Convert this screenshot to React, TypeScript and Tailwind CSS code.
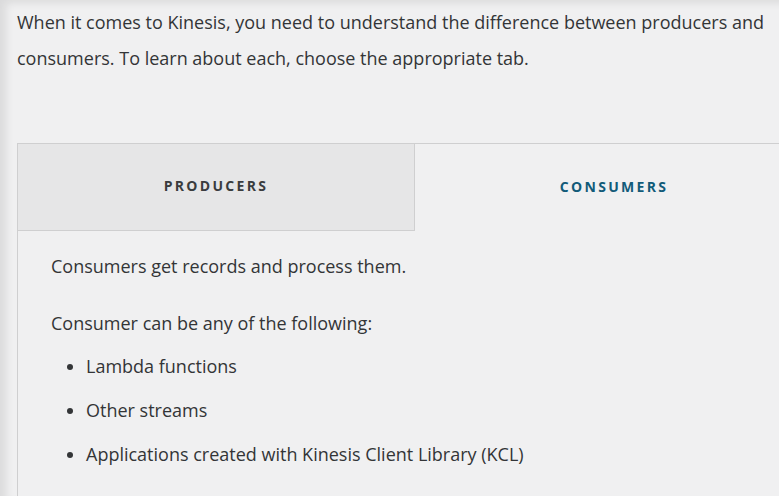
import React from "react";

export default function App() {
  return (
    <div
      className="relative w-[779px] h-[496px] overflow-hidden bg-[#f0f0f1] text-[#333537]"
      style={{ fontFamily: '"Open Sans", "Noto Sans", sans-serif' }}
    >
      <div className="pointer-events-none absolute inset-0 shadow-[inset_8px_5px_8px_-2px_rgba(0,0,0,0.09)]" />
      <div className="pl-[17px] pt-[4px]">
        <p className="text-[18px] leading-[36px] w-[762px]">
          When it comes to Kinesis, you need to understand the difference between producers and consumers. To learn about each, choose the appropriate tab.
        </p>
        <div className="mt-[67px] w-[796px]">
          <div className="flex h-[88px]">
            <div className="flex w-[398px] items-center justify-center border border-[#cfcfd0] bg-[#e6e6e7] pb-[3px] text-[14px] font-bold tracking-[2.3px] text-[#3a3c3e]">
              PRODUCERS
            </div>
            <div className="flex w-[398px] items-center justify-center border-t border-[#cfcfd0] pb-[3px] text-[14px] font-bold tracking-[2.3px] text-[#125b79]">
              CONSUMERS
            </div>
          </div>
          <div className="border-l border-[#cfcfd0] pl-[33px] pt-[17px] h-[300px] text-[18px] leading-[36px]">
            <p>Consumers get records and process them.</p>
            <p className="mt-[21px]">Consumer can be any of the following:</p>
            <ul className="mt-[7px] list-disc pl-[35px]">
              <li>Lambda functions</li>
              <li className="mt-[8px]">Other streams</li>
              <li className="mt-[8px]">Applications created with Kinesis Client Library (KCL)</li>
            </ul>
          </div>
        </div>
      </div>
    </div>
  );
}
